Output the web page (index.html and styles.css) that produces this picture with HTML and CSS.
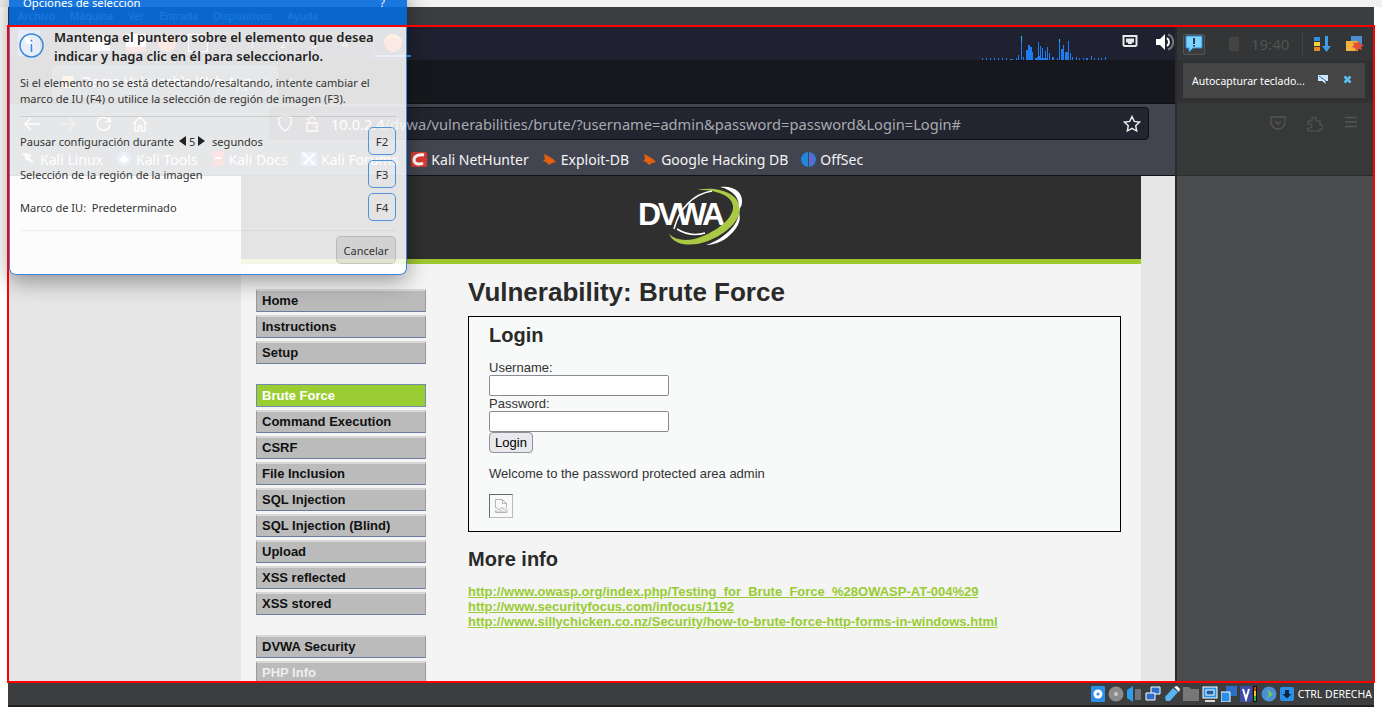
FILE: index.html
```html
<!DOCTYPE html>
<html lang="es">
<head>
<meta charset="utf-8">
<title>Opciones de selección</title>
<link rel="stylesheet" href="styles.css">
</head>
<body>
<div class="screen">
  <div class="strip"></div>
  <div class="vm">
    <div class="vm-menu">
      <span>Archivo</span><span>Máquina</span><span>Ver</span><span>Entrada</span><span>Dispositivos</span><span>Ayuda</span>
    </div>
    <div class="guest">
      <div class="kali-panel">
        <span class="kp-start"><svg width="18" height="16" viewBox="0 0 18 16"><path d="M1 3c5-2 10-1 14 3-3-1-5-1-6 0 3 1 5 4 6 8-3-4-7-6-10-6 1-2 0-4-4-5z" fill="#fff"/></svg></span>
        <span class="kp-win"></span>
        <span class="kp-doc"></span>
        <span class="kp-fox"></span>
        <span class="kp-box"></span>
        <span class="kp-sep"></span>
        <span class="kp-num">1</span><span class="kp-num">2</span><span class="kp-num">3</span><span class="kp-num">4</span>
        <span class="kp-sep"></span>
        <span class="kp-fox kp-fox-run"></span>
        <svg class="graph" width="130" height="24" viewBox="0 0 130 24"><path fill="#1f7bf0" d="M1 22h1v2H1zM5 22h1v2H5zM9 22h1v2H9zM13 22h1v2h-1zM17 22h1v2h-1zM21 22h1v2h-1zM25 22h1v2h-1zM29 23h3v1h-3zM35 22h1v2h-1zM37 19h1v5h-1zM40 0h1v24h-1zM42 21h1v3h-1zM45 14h2v10h-2zM47 9h2v15h-2zM49 11h2v13h-2zM51 16h1v8h-1zM54 22h2v2h-2zM56 21h1v3h-1zM58 20h1v4h-1zM59 22h2v2h-2zM63 22h2v2h-2zM65 22h2v2h-2zM57 22h8v2h-8zM57 6h1v18h-1zM59 10h1v14h-1zM61 12h1v12h-1zM64 15h1v9h-1zM66 11h1v13h-1zM68 17h1v7h-1zM71 21h2v3h-2zM76 22h1v2h-1zM78 3h1v21h-1zM80 13h2v11h-2zM82 9h1v15h-1zM84 16h3v8h-3zM87 5h1v19h-1zM89 17h1v7h-1zM91 21h1v3h-1zM95 21h1v3h-1zM98 22h1v2h-1zM102 22h1v2h-1zM105 22h2v2h-2zM110 20h1v4h-1zM113 22h1v2h-1zM117 22h1v2h-1zM120 22h1v2h-1zM124 21h1v3h-1z"/><path fill="#16c1ee" d="M40 0h1v5h-1zM78 3h1v3h-1z"/></svg>
        <svg class="net" width="16" height="14" viewBox="0 0 16 14"><path d="M1.500 1h13v9l-1 1h-11l-1-1z" fill="none" stroke="#e8e8e8" stroke-width="2"/><path d="M4 3.500h8v4H10v1.500H6V7.500H4z" fill="#e8e8e8"/></svg>
        <svg class="speaker" width="18" height="18" viewBox="0 0 18 18"><path d="M0 6h4l5-5v16l-5-5H0z" fill="#fff"/><path d="M11 5a5 5 0 0 1 0 8" fill="none" stroke="#fff" stroke-width="2"/><path d="M12 1.500a8 8 0 0 1 0 15" fill="none" stroke="#777" stroke-width="2"/></svg>
      </div>
      <div class="tabs">
        <span class="tab"><span class="tab-dot"></span><span class="tab-title">Damn Vulnerable Web App</span><span class="tab-x">×</span></span>
        <span class="tab-plus">+</span>
      </div>
      <div class="nav">
        <svg class="nav-i" width="20" height="18" viewBox="0 0 20 18"><path d="M18 9H3M9 3L3 9l6 6" fill="none" stroke="#f4f4f4" stroke-width="1.500"/></svg>
        <svg class="nav-i" width="20" height="18" viewBox="0 0 20 18"><path d="M2 9h15M11 3l6 6-6 6" fill="none" stroke="#8d8f96" stroke-width="1.500"/></svg>
        <svg class="nav-i" width="20" height="18" viewBox="0 0 20 18"><path d="M16 10a6.500 6.500 0 1 1-2-6l2 2M16 2v4.500h-4.500" fill="none" stroke="#f4f4f4" stroke-width="1.500"/></svg>
        <svg class="nav-i" width="20" height="18" viewBox="0 0 20 18"><path d="M3 9l7-7 7 7M5 7.500V16h3.500v-5h3v5H15V7.500" fill="none" stroke="#f4f4f4" stroke-width="1.500"/></svg>
        <div class="url">
          <svg width="16" height="17" viewBox="0 0 16 17"><path d="M8 1l6.500 2c0 6-1.500 10.500-6.500 13C3 13.500 1.500 9 1.500 3z" fill="none" stroke="#e8e8e8" stroke-width="1.300"/></svg>
          <svg width="16" height="17" viewBox="0 0 16 17"><path d="M3 8h10v8H3zM5 8V5a3 3 0 0 1 6 0" fill="none" stroke="#e8e8e8" stroke-width="1.300"/><path d="M1 2l14 14" stroke="#e2553f" stroke-width="1.300"/></svg>
          <span class="url-text"><span class="url-host">10.0.2.4</span>/dvwa/vulnerabilities/brute/?username=admin&amp;password=password&amp;Login=Login#</span>
          <svg class="star" width="18" height="18" viewBox="0 0 18 18"><path d="M9 1.500l2.300 4.900 5.200.7-3.800 3.600 1 5.300L9 13.400l-4.700 2.600 1-5.300L1.500 7.100l5.200-.7z" fill="none" stroke="#eee" stroke-width="1.400"/></svg>
        </div>
      </div>
      <div class="bookmarks">
        <span class="bm bm-1"><svg width="16" height="14" viewBox="0 0 16 14"><path d="M1 2c5-2 9-1 13 3-3-1-4-1-5 0 2 1 4 4 5 8-3-4-6-5-9-5 1-2 0-4-4-6z" fill="#ddd"/></svg>Kali Linux</span>
        <span class="bm bm-2"><svg width="16" height="16" viewBox="0 0 16 16"><circle cx="8" cy="8" r="7" fill="#5e8fd8"/><path d="M3 9l5-5 5 5-5 3z" fill="#fff"/></svg>Kali Tools</span>
        <span class="bm bm-3"><svg width="14" height="16" viewBox="0 0 14 16"><path d="M1 0h12v14l-12 2z" fill="#dc3b30"/><path d="M4 6h6v2H4z" fill="#fff"/></svg>Kali Docs</span>
        <span class="bm bm-4"><svg width="16" height="16" viewBox="0 0 16 16"><path d="M0 1h16v14H0z" fill="#5e8fd8"/><path d="M2 2l12 12M3 13L13 3" stroke="#fff" stroke-width="2"/></svg>Kali Forums</span>
        <span class="bm bm-5"><svg width="16" height="15" viewBox="0 0 16 15"><rect width="16" height="15" rx="2" fill="#d93a34"/><path d="M13 3C8 2 3 4 3 8s5 5 9 3" fill="none" stroke="#fff" stroke-width="3"/></svg>Kali NetHunter</span>
        <span class="bm bm-6"><svg width="15" height="13" viewBox="0 0 15 13"><path d="M2 1l4 2 5 3 3 3-4 1-3 2-3-3-3-1 2-2z" fill="#e4600f"/></svg>Exploit-DB</span>
        <span class="bm bm-7"><svg width="15" height="13" viewBox="0 0 15 13"><path d="M2 1l4 2 5 3 3 3-4 1-3 2-3-3-3-1 2-2z" fill="#e4600f"/></svg>Google Hacking DB</span>
        <span class="bm bm-8"><svg width="15" height="15" viewBox="0 0 15 15"><circle cx="7.500" cy="7.500" r="7.500" fill="#2485dc"/><path d="M7 0h1v15H7z" fill="#42454f"/><path d="M8 1a7 7 0 0 1 0 13c2-3 2-10 0-13z" fill="#8f4fd0"/></svg>OffSec</span>
      </div>
      <div class="page">
        <div class="dvwa">
          <div class="dvwa-head">
            <div class="logo">
              <span class="logo-text">DVWA</span>
              <svg class="swoosh" width="80" height="62" viewBox="0 0 80 62"><path d="M32 5C51 1 73 7 75 23 76 35 61 49 43 56 27 62 9 61 4 49 11 56 25 57 38 51 55 44 69 32 68 21 67 10 49 4 32 5z" fill="#a9c945"/><path d="M55 2C68 0 78 7 77 17c0 3-1 5-3 7C75 13 68 5 55 2z" fill="#fff"/><path d="M41 60C57 55 73 41 74 28c2 6 0 12-6 19-7 8-17 13-27 13z" fill="#fff"/><path d="M9 44C14 24 28 9 47 6" fill="none" stroke="#fff" stroke-width="1.500"/><path d="M12 44c8 5 18 7 28 4" fill="none" stroke="#fff" stroke-width="1.500"/></svg>
            </div>
          </div>
          <div class="dvwa-rule"></div>
          <div class="dvwa-body">
            <nav class="menu">
              <ul>
                <li>Home</li><li>Instructions</li><li>Setup</li>
              </ul>
              <ul>
                <li class="on">Brute Force</li><li>Command Execution</li><li>CSRF</li><li>File Inclusion</li><li>SQL Injection</li><li>SQL Injection (Blind)</li><li>Upload</li><li>XSS reflected</li><li>XSS stored</li>
              </ul>
              <ul>
                <li>DVWA Security</li><li class="dim">PHP Info</li>
              </ul>
            </nav>
            <main class="main">
              <h1>Vulnerability: Brute Force</h1>
              <div class="box">
                <h2>Login</h2>
                <div class="lab">Username:</div>
                <div class="inp"></div>
                <div class="lab">Password:</div>
                <div class="inp"></div>
                <button class="btn" type="button">Login</button>
                <p class="welcome">Welcome to the password protected area admin</p>
                <div class="broken"><svg width="16" height="16" viewBox="0 0 16 16"><path d="M2.500 1.500h7l4 4v4l-2 2-2.500-2-3 2.500-3-2.500-.5.5zM9.500 1.500v4h4M2.500 12.500l3 2 3-2 2.500 2 3-3v3h-11.500z" fill="none" stroke="#b5b5b5"/></svg></div>
              </div>
              <h2 class="more">More info</h2>
              <div class="links">
                <a href="#">http://www.owasp.org/index.php/Testing_for_Brute_Force_%28OWASP-AT-004%29</a>
                <a href="#">http://www.securityfocus.com/infocus/1192</a>
                <a href="#">http://www.sillychicken.co.nz/Security/how-to-brute-force-http-forms-in-windows.html</a>
              </div>
            </main>
          </div>
        </div>
      </div>
    </div>
    <div class="status">
      <svg width="14" height="16" viewBox="0 0 14 16"><rect width="14" height="16" rx="1" fill="#2b8fe6"/><circle cx="7" cy="8" r="4.500" fill="#fff"/><circle cx="7" cy="8" r="1.500" fill="#2b8fe6"/></svg>
      <svg width="16" height="16" viewBox="0 0 16 16"><circle cx="8" cy="8" r="7.500" fill="#8b8b8b"/><circle cx="8" cy="8" r="2" fill="#c9c9c9"/></svg>
      <svg width="15" height="16" viewBox="0 0 15 16"><path d="M0 4l6-4v16l-6-4z" fill="#2f9ee8"/><path d="M8 3h6v11H8z" fill="#6f7478"/></svg>
      <svg width="16" height="16" viewBox="0 0 16 16"><path d="M6 1h9v7H6z" fill="#2b6fc9" stroke="#fff"/><path d="M1 7h9v7H1z" fill="#2b6fc9" stroke="#fff"/></svg>
      <svg width="16" height="16" viewBox="0 0 16 16"><path d="M1 11l8-9 5 4-8 9H2z" fill="#58b4f0"/><path d="M10 1l3-1 3 3-1 3z" fill="#fff"/></svg>
      <svg width="16" height="15" viewBox="0 0 16 15"><path d="M0 1h6l2 2h8v12H0z" fill="#777"/></svg>
      <svg width="16" height="16" viewBox="0 0 16 16"><rect x="1" y="1" width="14" height="11" fill="#2b8fe6" stroke="#fff"/><rect x="4" y="4" width="8" height="5" fill="#1c5ea8" stroke="#fff"/><path d="M3 14h10v2H3z" fill="#ddd"/></svg>
      <svg width="16" height="16" viewBox="0 0 16 16"><path d="M5 0h11v10H5z" fill="#2b6fc9"/><path d="M0 6h9v10H0z" fill="#2b8fe6" stroke="#fff"/></svg>
      <svg class="sb-v" width="18" height="16" viewBox="0 0 18 16"><rect width="12" height="16" rx="1" fill="#3d4aa8"/><path d="M3 3l3 10 3-10" fill="none" stroke="#fff" stroke-width="2"/><rect x="13" width="4" height="16" fill="#111"/><path d="M14 10h2v5h-2z" fill="#2fb52f"/><path d="M14 5h2v5h-2z" fill="#e6c92a"/><path d="M14 1h2v4h-2z" fill="#d93a2a"/></svg>
      <svg width="16" height="16" viewBox="0 0 16 16"><circle cx="8" cy="8" r="7.500" fill="#4a90d9"/><path d="M6 3l6 5-6 5 2-5z" fill="#7ac943"/></svg>
      <svg width="14" height="14" viewBox="0 0 14 14"><rect width="14" height="14" rx="2" fill="#2b8fe6"/><path d="M5 3h4v4h2.500L7 11.500 2.500 7H5z" fill="#10244a"/></svg>
      <span class="status-text">CTRL DERECHA</span>
    </div>
  </div>

  <aside class="side">
    <div class="tray">
      <span class="tray-alert"><svg width="18" height="18" viewBox="0 0 18 18"><path d="M1 1h16v12H8l-4 4v-4H1z" fill="#7fd4ff" stroke="#2a8fe0"/><path d="M8.300 3h1.500v6H8.300zM8.300 10h1.500v1.500H8.300z" fill="#111"/></svg></span>
      <span class="tray-batt"></span>
      <span class="tray-time">19:40</span>
      <span class="tray-sep"></span>
      <svg class="tray-a" width="18" height="16" viewBox="0 0 18 16"><path d="M0 1h6v4H0z" fill="#2b8fe6"/><path d="M0 6h6v4H0z" fill="#f2d23c"/><path d="M0 11h6v4H0z" fill="#e8842a"/><path d="M11 0h3v10h3l-4.500 6L8 10h3z" fill="#3a9ee8"/></svg>
      <svg class="tray-b" width="18" height="16" viewBox="0 0 18 16"><path d="M5 0h11v8H5z" fill="#4a8ed0"/><path d="M0 5h12v10H0z" fill="#f2b53c"/><path d="M7 6l3 1 3-2 1 3 4 1-3 2 1 3-3-1-3 2-1-3-3-1 2-2z" fill="#e2503a"/></svg>
    </div>
    <div class="note">
      <div class="note-card">
        <span class="note-text">Autocapturar teclado...</span>
        <svg class="note-a" width="10" height="9" viewBox="0 0 10 9"><path d="M0 0h10v6H7l1 3-4-3H0z" fill="#cfe6fb"/><path d="M1 1l7 5" stroke="#2a6fb8"/></svg>
        <svg class="note-b" width="9" height="9" viewBox="0 0 9 9"><path d="M1.500 1.500l6 6M7.500 1.500l-6 6" stroke="#5cc0f5" stroke-width="2.500"/></svg>
      </div>
    </div>
    <div class="side-tools">
      <svg width="16" height="14" viewBox="0 0 16 14"><path d="M1 1h14v5a7 7 0 0 1-14 0z" fill="none" stroke="#555" stroke-width="1.300"/><path d="M5 5l3 3 3-3" fill="none" stroke="#555" stroke-width="1.300"/></svg>
      <svg width="16" height="16" viewBox="0 0 16 16"><path d="M1 5h4V3a2 2 0 0 1 4 0v2h4v4h1a2 2 0 0 1 0 4h-1v2H1v-3h2a2 2 0 0 0 0-4H1z" fill="none" stroke="#555" stroke-width="1.200"/></svg>
      <svg width="14" height="12" viewBox="0 0 14 12"><path d="M1 1.500h12M1 6h12M1 10.500h12" stroke="#555" stroke-width="1.300"/></svg>
    </div>
    <div class="side-rest"></div>
  </aside>

  <section class="dialog">
    <header class="dlg-title"><span>Opciones de selección</span><span class="dlg-q">?</span></header>
    <div class="dlg-body">
      <div class="dlg-head">
        <svg width="25" height="25" viewBox="0 0 25 25"><circle cx="12.500" cy="12.500" r="11.500" fill="none" stroke="#3a86dc" stroke-width="1.500"/><path d="M12.500 11v8" stroke="#3a86dc" stroke-width="1.500"/><circle cx="12.500" cy="7.500" r="1" fill="#3a86dc"/></svg>
        <strong>Mantenga el puntero sobre el elemento que desea indicar y haga clic en él para seleccionarlo.</strong>
      </div>
      <p class="dlg-p">Si el elemento no se está detectando/resaltando, intente cambiar el marco de IU (F4) o utilice la selección de región de imagen (F3).</p>
      <div class="dlg-rule"></div>
      <div class="dlg-rows">
        <div class="dlg-row"><span class="dlg-t">Pausar configuración durante <span class="tri-l"></span>5<span class="tri-r"></span> segundos</span><span class="key">F2</span></div>
        <div class="dlg-row"><span class="dlg-t">Selección de la región de la imagen</span><span class="key">F3</span></div>
        <div class="dlg-row"><span class="dlg-t">Marco de IU:&nbsp; Predeterminado</span><span class="key">F4</span></div>
      </div>
      <div class="dlg-rule dlg-rule-2"></div>
      <div class="dlg-foot"><span class="cancel">Cancelar</span></div>
    </div>
  </section>

  <div class="redframe"></div>
</div>
</body>
</html>
```

FILE: styles.css
```css
* { box-sizing: border-box; }
html, body { margin: 0; height: 100%; overflow: hidden; background: #fff; }
svg { display: block; flex: none; }

.screen { position: relative; width: 1382px; height: 707px; overflow: hidden; font-family: "Noto Sans", sans-serif; display: flex; flex-direction: column; }
.strip { height: 7px; background: #f1f1f1; flex: none; }
.vm { flex: 1; margin: 0 8px; width: 1366px; display: flex; flex-direction: column; min-height: 0; }

.vm-menu { height: 19px; flex: none; background: #3c3d3e; color: #fff; font-size: 10.500px; display: flex; gap: 15px; padding: 3px 0 0 10px; line-height: 13px; }

.guest { height: 656px; flex: none; display: flex; flex-direction: column; background: #17181d; }

/* Kali top panel */
.kali-panel { height: 34px; flex: none; background: #1f2130; display: flex; align-items: center; padding: 0 200px 0 10px; }
.kp-start { width: 22px; height: 26px; background: #3f74c9; display: flex; align-items: center; justify-content: center; margin-right: 50px; }
.kp-win { width: 20px; height: 16px; background: #fff; margin-right: 16px; }
.kp-doc { width: 20px; height: 18px; background: #fff; margin-right: 12px; border-bottom: 5px solid #d3403a; }
.kp-fox { width: 18px; height: 18px; border-radius: 50%; background: #e3542b; border-top: 4px solid #f5a12c; margin-right: 12px; }
.kp-box { width: 20px; height: 18px; border: 1px solid #fff; margin-right: 26px; }
.kp-sep { width: 1px; height: 20px; background: #666; margin-right: 14px; }
.kp-num { color: #bbb; font-size: 11px; width: 31px; }
.kp-fox-run { position: relative; margin-left: -4px; }
.kp-fox-run::after { content: ""; position: absolute; left: -9px; bottom: -5px; width: 36px; height: 2px; background: #4a8fe0; }
.graph { margin-left: auto; margin-top: 10px; margin-right: 11px; align-self: flex-start; }
.net { margin-right: 18px; margin-top: -3px; }
.speaker { margin-top: -3px; }

/* Browser chrome */
.tabs { height: 43px; flex: none; background: #17181d; display: flex; align-items: center; padding-left: 44px; gap: 8px; }
.tab { width: 226px; height: 33px; background: #42454f; border-radius: 4px; display: flex; align-items: center; padding: 0 10px; gap: 8px; color: #fff; font-size: 13.500px; }
.tab-dot { width: 12px; height: 12px; background: #f2c14e; border-radius: 2px; }
.tab-title { flex: 1; white-space: nowrap; overflow: hidden; }
.tab-x { color: #ddd; }
.tab-plus { color: #ddd; font-size: 18px; }

.nav { height: 40px; flex: none; background: #42454f; border-top: 1px solid #111; display: flex; align-items: center; padding: 0 225px 0 14px; gap: 16px; }
.url { flex: 1; height: 33px; margin-left: 103px; background: #22242f; border: 1px solid #101116; border-radius: 4px; display: flex; align-items: center; padding: 0 6px 0 7px; gap: 11px; min-width: 0; }
.url-text { flex: 1; color: #a9aab0; font-size: 14.640px; white-space: nowrap; overflow: hidden; }
.url-host { color: #f2f2f2; }
.star { margin-right: 1px; }

.bookmarks { height: 33px; flex: none; background: #42454f; border-bottom: 1px solid #101116; display: flex; align-items: center; padding-left: 12px; color: #f4f4f4; font-size: 14px; }
.bm { display: flex; align-items: center; gap: 4px; white-space: nowrap; }
.bm-1, .bm-2, .bm-3, .bm-4, .bm-5, .bm-6, .bm-7 { margin-right: 13px; }

/* Page */
.page { flex: 1; min-height: 0; background: #e6e6e6; padding: 0 233px; overflow: hidden; }
.dvwa { width: 900px; height: 100%; background: #f4f4f4; font-family: "Liberation Sans", Arial, sans-serif; color: #222; overflow: hidden; }
.dvwa-head { height: 83px; background: #2f2f2f; display: flex; justify-content: center; align-items: flex-start; }
.dvwa-rule { height: 5px; background: #a0c82e; }
.logo { position: relative; width: 108px; height: 83px; }
.logo-text { position: absolute; left: 1px; top: 18px; color: #fff; font-weight: 700; font-size: 32px; letter-spacing: -3px; line-height: 40px; }
.swoosh { position: absolute; left: 28px; top: 9px; }
.dvwa-body { display: flex; padding-left: 15px; }

.menu { width: 170px; flex: none; padding-top: 25px; }
.menu ul { list-style: none; margin: 0 0 20px; padding: 0; }
.menu li { height: 23px; margin-bottom: 3px; background: #bbb; border: 1px solid; border-color: #d8d8d8 #9a9a9a #6d7da0 #9a9a9a; border-width: 2px 1px 1.500px; padding-left: 5px; font-size: 13px; font-weight: 700; line-height: 19px; color: #111; }
.menu li.on { background: #9acd32; color: #fff; border-color: #7389ad; border-width: 1.500px; line-height: 21px; }
.menu li.dim { color: #eee; }

.main { margin-left: 42px; width: 653px; flex: none; padding-top: 13px; }
h1 { font-size: 26px; line-height: 30px; margin: 0 0 9px; font-weight: 700; color: #2a2a2a; }
.box { height: 216px; border: 1px solid #000; background: #f8f9f9; padding: 7px 20px 0; font-size: 13px; }
h2 { font-size: 20px; line-height: 23px; margin: 0; font-weight: 700; color: #2a2a2a; }
.lab { line-height: 15px; height: 15px; color: #333; }
.box h2 { margin-bottom: 13px; }
.inp { width: 180px; height: 21px; background: #fff; border: 1px solid #8a8a95; border-radius: 2px; }
.btn { display: block; width: 44px; height: 21px; padding: 0; font: 13px "Liberation Sans", Arial, sans-serif; color: #000; background: #e9e9ed; border: 1px solid #8f8f9d; border-radius: 4px; }
.welcome { margin: 13px 0 13px; line-height: 15px; color: #333; }
.broken { width: 24px; height: 24px; margin-top: 1px; border: 1px solid; border-color: #6a6a6a #bbb #bbb #6a6a6a; display: flex; align-items: center; justify-content: center; }
.more { margin-top: 16px; line-height: 23px; }
.links { margin-top: 13px; display: flex; flex-direction: column; align-items: flex-start; font-size: 13px; font-weight: 700; line-height: 15px; }
.links a { color: #9c3; }

/* VM status bar */
.status { height: 25px; flex: none; background: #3c3d3e; border-bottom: 2px solid #222; display: flex; align-items: center; justify-content: flex-end; gap: 3px; padding-right: 2px; }
.status-text { color: #fff; font-size: 10.500px; white-space: nowrap; margin-left: 1px; }

/* Right side window */
.side { position: absolute; left: 1175px; top: 26px; width: 199px; height: 656px; display: flex; flex-direction: column; border-left: 2px solid #2a2a2a; background: #4b4c4d; }
.tray { height: 34px; flex: none; background: #333536; display: flex; align-items: center; padding: 2px 0 0 6px; }
.tray-alert { width: 22px; height: 21px; border: 1px solid #555; border-radius: 2px; background: #3a3c3d; display: flex; align-items: center; justify-content: center; margin-right: 24px; }
.tray-batt { width: 10px; height: 14px; background: #444; margin-right: 12px; }
.tray-time { color: #515253; font-size: 15px; margin-right: 13px; }
.tray-sep { width: 1px; height: 24px; background: #444; margin-right: 11px; }
.tray-a { margin-right: 14px; }
.note { height: 43px; flex: none; background: #303132; padding: 3px 9px 0 6px; }
.note-card { height: 35px; background: #454545; display: flex; align-items: center; padding-left: 9px; }
.note-text { color: #fff; font-size: 10.500px; white-space: nowrap; }
.note-a { margin-left: 13px; margin-bottom: 3px; }
.note-b { margin-left: 15px; margin-bottom: 3px; }
.side-tools { height: 73px; flex: none; background: #373838; display: flex; align-items: flex-start; padding: 13px 0 0 93px; gap: 21px; border-bottom: 1px solid #2c2c2c; }
.side-rest { flex: 1; }

/* Selection dialog */
.dialog { position: absolute; left: 9px; top: -10px; width: 398px; height: 285px; display: flex; flex-direction: column; border-radius: 0 0 7px 7px; box-shadow: 0 6px 22px rgba(0, 0, 0, .38); }
.dlg-title { height: 35px; flex: none; background: rgba(4, 107, 220, .91); color: #fff; padding: 5px 14px 0 14px; font-size: 11.300px; line-height: 16px; display: flex; justify-content: space-between; }
.dlg-q { margin-right: 8px; }
.dlg-body { flex: 1; background: rgba(255, 255, 255, .87); border: 1.500px solid #3a86dc; border-top: 0; border-radius: 0 0 7px 7px; padding: 8px 10px 0 10px; display: flex; flex-direction: column; color: #333; }
.dlg-head { display: flex; gap: 10px; margin-left: -1px; font-size: 13px; line-height: 19px; color: #222; }
.dlg-head strong { font-weight: 600; margin-top: -5px; }
.dlg-p { margin: 9px 0 0; font-size: 11.050px; line-height: 16px; }
.dlg-rule { height: 1px; background: rgba(0, 0, 0, .1); margin-top: 9px; flex: none; }
.dlg-rows { display: flex; flex-direction: column; gap: 5px; margin-top: 10px; }
.dlg-row { display: flex; justify-content: space-between; align-items: center; font-size: 11.050px; height: 28px; }
.dlg-t { display: flex; align-items: center; white-space: pre; }
.key { width: 28px; height: 28px; border: 1.500px solid #4f93dc; border-radius: 5px; display: flex; align-items: center; justify-content: center; font-size: 11.500px; }
.tri-l, .tri-r { width: 0; height: 0; border: 5px solid transparent; }
.tri-l { border-right: 7px solid #222; border-left: 0; margin: 0 3px 0 2px; }
.tri-r { border-left: 7px solid #222; border-right: 0; margin: 0 4px 0 3px; }
.dlg-rule-2 { margin-top: 9px; background: rgba(0, 0, 0, .05); }
.dlg-foot { display: flex; justify-content: flex-end; margin-top: 5px; }
.cancel { width: 60px; height: 28px; background: rgba(0, 0, 0, .08); border: 1px solid rgba(0, 0, 0, .12); border-radius: 5px; font-size: 11px; display: flex; align-items: center; justify-content: center; }

.redframe { position: absolute; left: 7px; top: 25px; width: 1368px; height: 658px; border: 2px solid #f00; pointer-events: none; }
```
